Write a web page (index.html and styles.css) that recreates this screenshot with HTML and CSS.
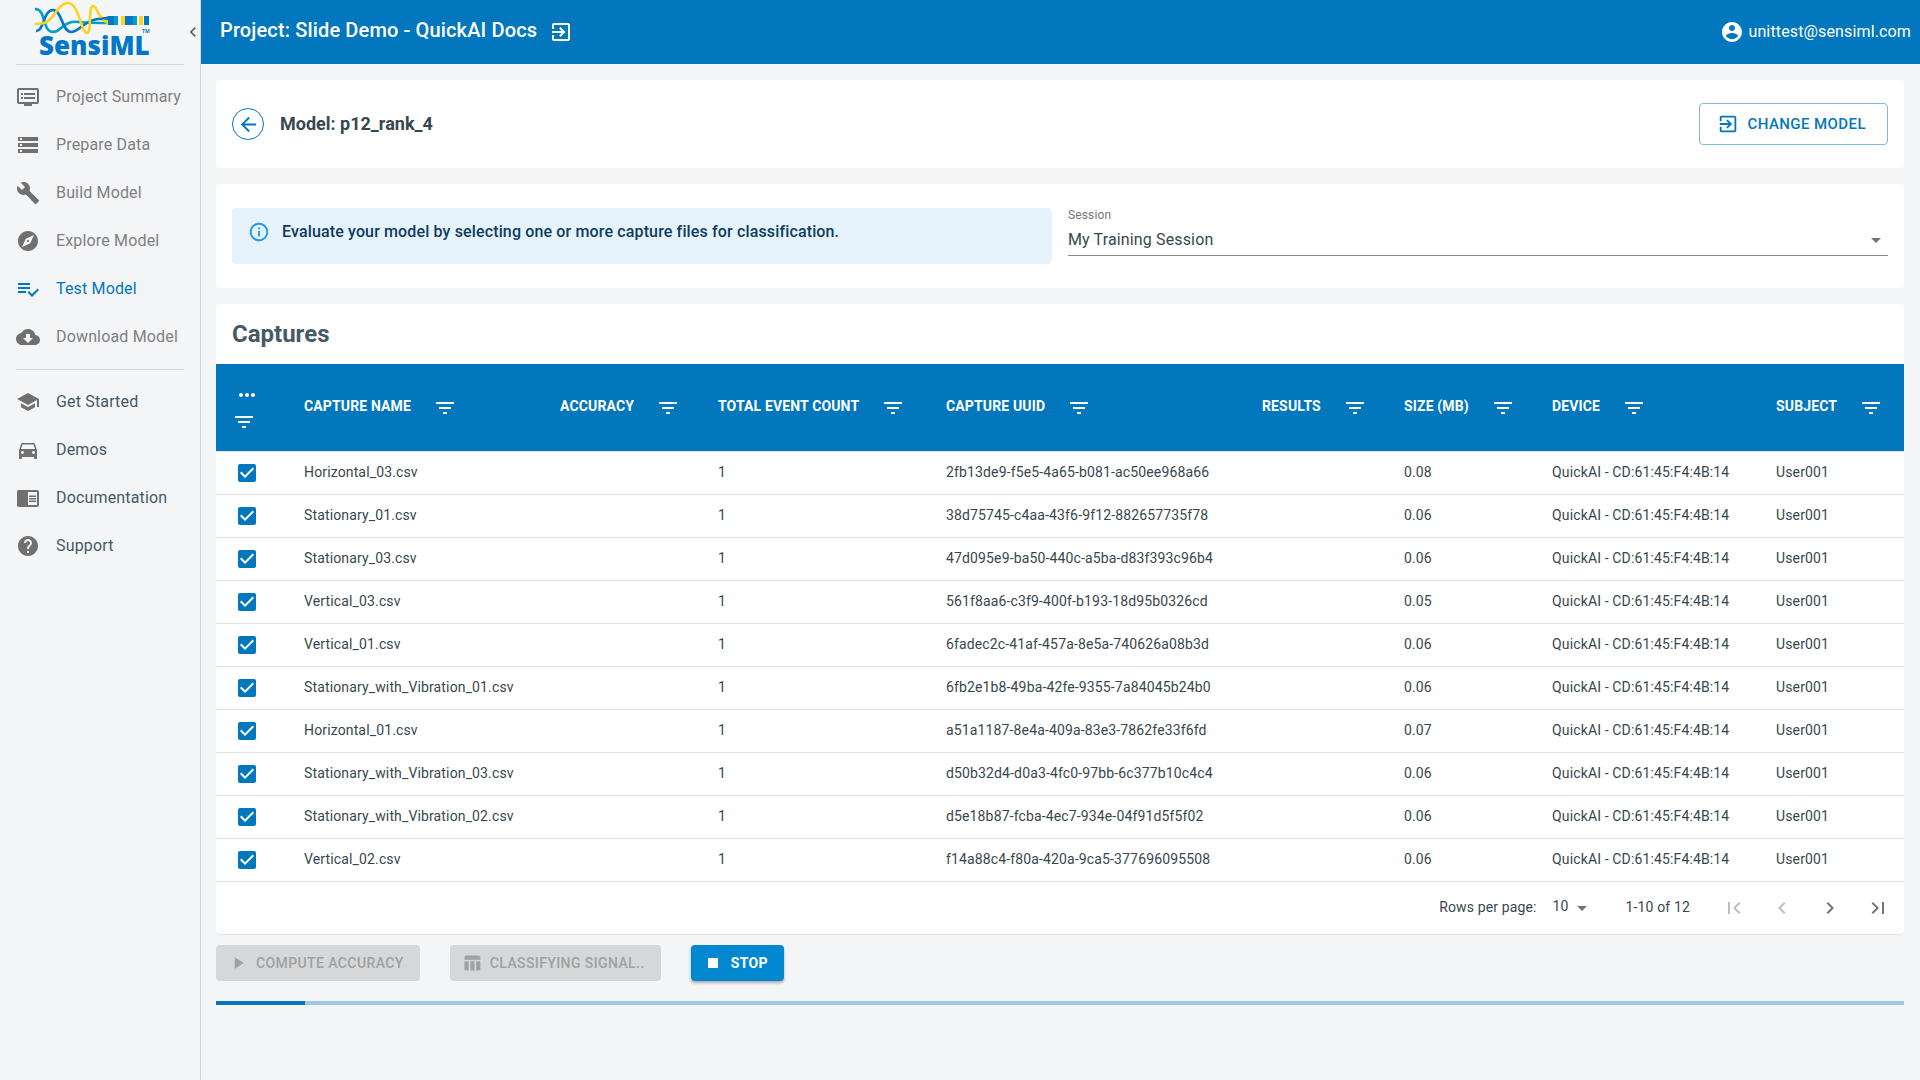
FILE: index.html
```html
<!DOCTYPE html>
<html lang="en">
<head>
<meta charset="utf-8">
<title>SensiML - Test Model</title>
<link rel="stylesheet" href="styles.css">
</head>
<body>
<svg class="defs" aria-hidden="true">
  <symbol id="filter" viewBox="0 0 24 24"><path d="M10 18h4v-2h-4v2zM3 6v2h18V6H3zm3 7h12v-2H6v2z"/></symbol>
  <symbol id="exit" viewBox="0 0 24 24"><path d="M10.09 15.59L11.5 17l5-5-5-5-1.41 1.41L12.67 11H3v2h9.67l-2.58 2.59zM19 3H5c-1.11 0-2 .9-2 2v4h2V5h14v14H5v-4H3v4c0 1.1.89 2 2 2h14c1.1 0 2-.9 2-2V5c0-1.1-.9-2-2-2z"/></symbol>
</svg>
<div class="app">
  <aside class="sidebar">
    <div class="brand">
      <svg class="logo" viewBox="0 0 130 64" role="img" aria-label="SensiML">
        <g fill="none" stroke-width="2.600">
          <path stroke="#00a0c8" d="M7 9c8 0 8 10 11 17 3 8 10 7 15 2 6-5 10-7 18-6 10 1 20 1 32 1"/>
          <path stroke="#0277c8" d="M8 31c8 1 7-21 17-21 9 0 9 22 18 22 8 0 14-12 27-13l12-1"/>
          <path stroke="#ffd21c" d="M7 24c5 0 9 0 13-3 7-5 11-18 20-18 11 0 13 30 19 30 5 0 1-27 6-27 4 0 4 10 11 13l8 3"/>
        </g>
        <path fill="#0277c8" d="M68 19l13-3v4z"/>
        <path fill="#ffd21c" d="M72 20h9v5z"/>
        <path fill="#0277c8" d="M80 16h7v9h-7zM97 16h8v9h-8zM116 16h5v9h-5z"/>
        <path fill="#00a0c8" d="M86 16h4v9h-4zM105 16h4v9h-4z"/>
        <path fill="#ffd21c" d="M93 16h4v9h-4zM111 16h4v9h-4z"/>
        <text class="logo-name" x="11" y="55">SensiML</text>
        <text class="logo-tm" x="114" y="33">TM</text>
      </svg>
      <button class="collapse" aria-label="Collapse menu"><svg viewBox="0 0 24 24"><path d="M15.41 7.41L14 6l-6 6 6 6 1.41-1.41L10.83 12z"/></svg></button>
    </div>
    <nav class="menu">
      <a href="#"><svg viewBox="0 0 24 24"><path d="M21 3H3c-1.1 0-2 .9-2 2v12c0 1.1.9 2 2 2h5v2h8v-2h5c1.1 0 1.99-.9 1.99-2L23 5c0-1.1-.9-2-2-2zm0 14H3V5h18v12zm-2-9H8v2h11V8zm0 4H8v2h11v-2zM7 8H5v2h2V8zm0 4H5v2h2v-2z"/></svg>Project Summary</a>
      <a href="#"><svg viewBox="0 0 24 24"><path d="M2 20h20v-4H2v4zm2-3h2v2H4v-2zM2 4v4h20V4H2zm4 3H4V5h2v2zm-4 7h20v-4H2v4zm2-3h2v2H4v-2z"/></svg>Prepare Data</a>
      <a href="#"><svg viewBox="0 0 24 24"><path d="M22.7 19l-9.1-9.1c.9-2.3.4-5-1.5-6.9-2-2-5-2.4-7.4-1.3L9 6 6 9 1.6 4.7C.4 7.1.9 10.1 2.9 12.1c1.9 1.9 4.6 2.4 6.9 1.5l9.1 9.1c.4.4 1 .4 1.4 0l2.3-2.3c.5-.4.5-1.1.1-1.4z"/></svg>Build Model</a>
      <a href="#"><svg viewBox="0 0 24 24"><path d="M12 10.9c-.61 0-1.1.49-1.1 1.1s.49 1.1 1.1 1.1c.61 0 1.1-.49 1.1-1.1s-.49-1.1-1.1-1.1zM12 2C6.48 2 2 6.48 2 12s4.48 10 10 10 10-4.48 10-10S17.52 2 12 2zm2.19 12.19L6 18l3.81-8.19L18 6l-3.81 8.19z"/></svg>Explore Model</a>
      <a href="#" class="active" aria-current="page"><svg viewBox="0 0 24 24"><path d="M14 10H2v2h12v-2zm0-4H2v2h12V6zM2 16h8v-2H2v2zm19.5-4.5L23 13l-6.99 7-4.51-4.5L13 14l3.01 3 5.49-5.5z"/></svg>Test Model</a>
      <a href="#"><svg viewBox="0 0 24 24"><path d="M19.35 10.04C18.67 6.59 15.64 4 12 4 9.11 4 6.6 5.64 5.35 8.04 2.34 8.36 0 10.91 0 14c0 3.31 2.69 6 6 6h13c2.76 0 5-2.24 5-5 0-2.64-2.05-4.78-4.65-4.96zM17 13l-5 5-5-5h3V9h4v4h3z"/></svg>Download Model</a>
    </nav>
    <nav class="menu menu-help">
      <a href="#"><svg viewBox="0 0 24 24"><path d="M5 13.18v4L12 21l7-3.82v-4L12 17l-7-3.82zM12 3L1 9l11 6 9-4.91V17h2V9L12 3z"/></svg>Get Started</a>
      <a href="#"><svg viewBox="0 0 24 24"><path d="M18.92 6.01C18.72 5.42 18.16 5 17.5 5h-11c-.66 0-1.21.42-1.42 1.01L3 12v8c0 .55.45 1 1 1h1c.55 0 1-.45 1-1v-1h12v1c0 .55.45 1 1 1h1c.55 0 1-.45 1-1v-8l-2.08-5.99zM6.5 16c-.83 0-1.5-.67-1.5-1.5S5.67 13 6.5 13s1.5.67 1.5 1.5S7.33 16 6.5 16zm11 0c-.83 0-1.5-.67-1.5-1.5s.67-1.5 1.5-1.5 1.5.67 1.5 1.5-.67 1.5-1.5 1.5zM5 11l1.5-4.5h11L19 11H5z"/></svg>Demos</a>
      <a href="#"><svg viewBox="0 0 24 24"><path d="M13 12h7v1.5h-7zm0-2.500h7V11h-7zm0 5h7V16h-7zM21 4H3c-1.100 0-2 .9-2 2v13c0 1.100.9 2 2 2h18c1.100 0 2-.9 2-2V6c0-1.100-.9-2-2-2zm0 15h-9V6h9v13z"/></svg>Documentation</a>
      <a href="#"><svg viewBox="0 0 24 24"><path d="M12 2C6.48 2 2 6.48 2 12s4.480 10 10 10 10-4.480 10-10S17.520 2 12 2zm1 17h-2v-2h2v2zm2.070-7.750l-.9.920C13.450 12.900 13 13.500 13 15h-2v-.5c0-1.100.450-2.100 1.170-2.830l1.240-1.260c.370-.360.590-.860.590-1.410 0-1.100-.9-2-2-2s-2 .9-2 2H8c0-2.210 1.790-4 4-4s4 1.790 4 4c0 .880-.360 1.680-.930 2.250z"/></svg>Support</a>
    </nav>
  </aside>

  <div class="page">
    <header class="topbar">
      <h1>Project: Slide Demo - QuickAI Docs</h1>
      <button aria-label="Change project"><svg><use href="#exit"/></svg></button>
      <a class="account" href="#"><svg viewBox="0 0 24 24"><path d="M12 2C6.480 2 2 6.480 2 12s4.480 10 10 10 10-4.480 10-10S17.520 2 12 2zm0 3c1.660 0 3 1.340 3 3s-1.340 3-3 3-3-1.340-3-3 1.340-3 3-3zm0 14.200c-2.500 0-4.710-1.280-6-3.220.030-1.990 4-3.080 6-3.080 1.990 0 5.970 1.090 6 3.080-1.290 1.940-3.500 3.220-6 3.220z"/></svg>unittest@sensiml.com</a>
    </header>

    <main class="content">
      <section class="card model">
        <button class="back" aria-label="Back"><svg viewBox="0 0 24 24"><path d="M20 11H7.830l5.590-5.590L12 4l-8 8 8 8 1.410-1.410L7.830 13H20v-2z"/></svg></button>
        <h2>Model: p12_rank_4</h2>
        <button class="change"><svg><use href="#exit"/></svg>Change Model</button>
      </section>

      <section class="card setup">
        <div class="alert" role="status">
          <svg viewBox="0 0 24 24"><path d="M11 7h2v2h-2zm0 4h2v6h-2zm1-9C6.480 2 2 6.480 2 12s4.480 10 10 10 10-4.480 10-10S17.520 2 12 2zm0 18c-4.410 0-8-3.590-8-8s3.590-8 8-8 8 3.590 8 8-3.590 8-8 8z"/></svg>
          <p>Evaluate your model by selecting one or more capture files for classification.</p>
        </div>
        <div class="field">
          <label for="session">Session</label>
          <span class="select"><select id="session"><option>My Training Session</option></select><svg viewBox="0 0 24 24"><path d="M7 10l5 5 5-5z"/></svg></span>
        </div>
      </section>

      <section class="card captures">
        <h2>Captures</h2>
        <table>
          <colgroup><col class="c-check"><col class="c-name"><col class="c-acc"><col class="c-count"><col class="c-uuid"><col class="c-res"><col class="c-size"><col class="c-dev"><col class="c-sub"></colgroup>
          <thead>
            <tr>
              <th class="tools"><button aria-label="Selection menu"><svg viewBox="0 0 24 24"><path d="M6 10c-1.100 0-2 .9-2 2s.9 2 2 2 2-.9 2-2-.9-2-2-2zm12 0c-1.100 0-2 .9-2 2s.9 2 2 2 2-.9 2-2-.9-2-2-2zm-6 0c-1.100 0-2 .9-2 2s.9 2 2 2 2-.9 2-2-.9-2-2-2z"/></svg></button><button aria-label="Filter selection"><svg><use href="#filter"/></svg></button></th>
              <th><div class="head">Capture Name<button aria-label="Filter capture name"><svg><use href="#filter"/></svg></button></div></th>
              <th><div class="head">Accuracy<button aria-label="Filter accuracy"><svg><use href="#filter"/></svg></button></div></th>
              <th><div class="head">Total Event Count<button aria-label="Filter total event count"><svg><use href="#filter"/></svg></button></div></th>
              <th><div class="head">Capture UUID<button aria-label="Filter capture UUID"><svg><use href="#filter"/></svg></button></div></th>
              <th><div class="head">Results<button aria-label="Filter results"><svg><use href="#filter"/></svg></button></div></th>
              <th><div class="head">Size (MB)<button aria-label="Filter size"><svg><use href="#filter"/></svg></button></div></th>
              <th><div class="head">Device<button aria-label="Filter device"><svg><use href="#filter"/></svg></button></div></th>
              <th><div class="head">Subject<button aria-label="Filter subject"><svg><use href="#filter"/></svg></button></div></th>
            </tr>
          </thead>
          <tbody>
            <tr><td><input type="checkbox" checked aria-label="Horizontal_03.csv"></td><td>Horizontal_03.csv</td><td></td><td>1</td><td>2fb13de9-f5e5-4a65-b081-ac50ee968a66</td><td></td><td>0.08</td><td>QuickAI - CD:61:45:F4:4B:14</td><td>User001</td></tr>
            <tr><td><input type="checkbox" checked aria-label="Stationary_01.csv"></td><td>Stationary_01.csv</td><td></td><td>1</td><td>38d75745-c4aa-43f6-9f12-882657735f78</td><td></td><td>0.06</td><td>QuickAI - CD:61:45:F4:4B:14</td><td>User001</td></tr>
            <tr><td><input type="checkbox" checked aria-label="Stationary_03.csv"></td><td>Stationary_03.csv</td><td></td><td>1</td><td>47d095e9-ba50-440c-a5ba-d83f393c96b4</td><td></td><td>0.06</td><td>QuickAI - CD:61:45:F4:4B:14</td><td>User001</td></tr>
            <tr><td><input type="checkbox" checked aria-label="Vertical_03.csv"></td><td>Vertical_03.csv</td><td></td><td>1</td><td>561f8aa6-c3f9-400f-b193-18d95b0326cd</td><td></td><td>0.05</td><td>QuickAI - CD:61:45:F4:4B:14</td><td>User001</td></tr>
            <tr><td><input type="checkbox" checked aria-label="Vertical_01.csv"></td><td>Vertical_01.csv</td><td></td><td>1</td><td>6fadec2c-41af-457a-8e5a-740626a08b3d</td><td></td><td>0.06</td><td>QuickAI - CD:61:45:F4:4B:14</td><td>User001</td></tr>
            <tr><td><input type="checkbox" checked aria-label="Stationary_with_Vibration_01.csv"></td><td>Stationary_with_Vibration_01.csv</td><td></td><td>1</td><td>6fb2e1b8-49ba-42fe-9355-7a84045b24b0</td><td></td><td>0.06</td><td>QuickAI - CD:61:45:F4:4B:14</td><td>User001</td></tr>
            <tr><td><input type="checkbox" checked aria-label="Horizontal_01.csv"></td><td>Horizontal_01.csv</td><td></td><td>1</td><td>a51a1187-8e4a-409a-83e3-7862fe33f6fd</td><td></td><td>0.07</td><td>QuickAI - CD:61:45:F4:4B:14</td><td>User001</td></tr>
            <tr><td><input type="checkbox" checked aria-label="Stationary_with_Vibration_03.csv"></td><td>Stationary_with_Vibration_03.csv</td><td></td><td>1</td><td>d50b32d4-d0a3-4fc0-97bb-6c377b10c4c4</td><td></td><td>0.06</td><td>QuickAI - CD:61:45:F4:4B:14</td><td>User001</td></tr>
            <tr><td><input type="checkbox" checked aria-label="Stationary_with_Vibration_02.csv"></td><td>Stationary_with_Vibration_02.csv</td><td></td><td>1</td><td>d5e18b87-fcba-4ec7-934e-04f91d5f5f02</td><td></td><td>0.06</td><td>QuickAI - CD:61:45:F4:4B:14</td><td>User001</td></tr>
            <tr><td><input type="checkbox" checked aria-label="Vertical_02.csv"></td><td>Vertical_02.csv</td><td></td><td>1</td><td>f14a88c4-f80a-420a-9ca5-377696095508</td><td></td><td>0.06</td><td>QuickAI - CD:61:45:F4:4B:14</td><td>User001</td></tr>
          </tbody>
        </table>
        <div class="pager">
          <label for="rows">Rows per page:</label>
          <span class="select rows"><select id="rows"><option>10</option></select><svg viewBox="0 0 24 24"><path d="M7 10l5 5 5-5z"/></svg></span>
          <span class="range">1-10 of 12</span>
          <div class="steps">
            <button disabled aria-label="First page"><svg viewBox="0 0 24 24"><path d="M18.410 16.590L13.820 12l4.590-4.590L17 6l-6 6 6 6zM6 6h2v12H6z"/></svg></button>
            <button disabled aria-label="Previous page"><svg viewBox="0 0 24 24"><path d="M15.410 7.410L14 6l-6 6 6 6 1.410-1.410L10.830 12z"/></svg></button>
            <button aria-label="Next page"><svg viewBox="0 0 24 24"><path d="M10 6L8.590 7.410 13.170 12l-4.580 4.590L10 18l6-6z"/></svg></button>
            <button aria-label="Last page"><svg viewBox="0 0 24 24"><path d="M5.590 7.410L10.180 12l-4.590 4.590L7 18l6-6-6-6zM16 6h2v12h-2z"/></svg></button>
          </div>
        </div>
      </section>

      <div class="actions">
        <button class="btn" disabled><svg viewBox="0 0 24 24"><path d="M8 5v14l11-7z"/></svg>Compute Accuracy</button>
        <button class="btn" disabled><svg viewBox="0 0 24 24"><path d="M10 10.020h5V21h-5zM17 21h3c1.100 0 2-.9 2-2v-9h-5v11zm3-18H5c-1.100 0-2 .9-2 2v3h19V5c0-1.100-.9-2-2-2zM3 19c0 1.100.9 2 2 2h3V10H3v9z"/></svg>Classifying Signal..</button>
        <button class="btn stop"><svg viewBox="0 0 24 24"><path d="M6 6h12v12H6z"/></svg>Stop</button>
      </div>
      <div class="progress" role="progressbar" aria-label="Classification progress"><div class="progress-bar"></div></div>
    </main>
  </div>
</div>
</body>
</html>
```
FILE: styles.css
```css
:root {
  --primary: #0277bd;
  --text: #37474f;
  --heading: #455a64;
  --line: #e0e0e0;
  --icon: #757575;
}

* { box-sizing: border-box; }

body {
  margin: 0;
  background: #f4f5f7;
  color: var(--text);
  font: 400 14px/20px Roboto, "Liberation Sans", sans-serif;
  letter-spacing: 0.01em;
}

h1, h2, p { margin: 0; }

svg {
  width: 24px;
  height: 24px;
  fill: currentColor;
  flex: none;
  display: block;
}

.defs { display: none; }

button {
  border: 0;
  padding: 0;
  background: none;
  color: inherit;
  font: inherit;
  cursor: pointer;
}

a { color: inherit; text-decoration: none; }

.app {
  display: flex;
  min-height: 100vh;
}

/* Sidebar */
.sidebar {
  flex: none;
  width: 201px;
  border-right: 1px solid #d3d5d8;
}

.brand {
  display: flex;
  align-items: center;
  height: 64px;
  padding-left: 28px;
}

.logo { width: 130px; height: 64px; }
.logo-name { font: 800 26px "Open Sans", sans-serif; letter-spacing: 0; fill: #0277c8; }
.logo-tm { font: 700 5px "Open Sans", sans-serif; letter-spacing: 0; fill: #0277c8; }

.collapse {
  display: flex;
  flex: 1;
  justify-content: flex-end;
  color: #616161;
}

.collapse svg { width: 20px; height: 20px; margin-right: -3px; }

.menu {
  margin: 0 16px;
  padding: 8px 0;
  border-top: 1px solid #d3d5d8;
  color: #808080;
}

.menu a {
  display: flex;
  align-items: center;
  gap: 16px;
  height: 48px;
  font-size: 16px;
  letter-spacing: 0.01em;
  white-space: nowrap;
}

.menu svg { color: #707070; }
.menu-help { color: var(--heading); }
.menu .active, .menu .active svg { color: var(--primary); }

/* Top bar */
.page { flex: 1; min-width: 0; }

.topbar {
  display: flex;
  align-items: center;
  gap: 12px;
  height: 64px;
  padding: 0 9px 0 19px;
  background: var(--primary);
  color: #fff;
}

.topbar h1 { font-size: 20px; font-weight: 500; padding-bottom: 4px; }

.account {
  display: flex;
  align-items: center;
  gap: 4px;
  margin-left: auto;
  font-size: 16px;
}

/* Cards */
.content { padding: 16px 16px 16px 15px; }

.card {
  background: #fff;
  border-radius: 4px;
  margin-bottom: 16px;
}

.model {
  display: flex;
  align-items: center;
  gap: 16px;
  padding: 23px 16px;
}

.model h2 { font-size: 18px; font-weight: 700; letter-spacing: 0; }

.back {
  display: flex;
  align-items: center;
  justify-content: center;
  width: 32px;
  height: 32px;
  border: 1px solid var(--primary);
  border-radius: 50%;
  color: var(--primary);
}

.back svg { width: 23px; height: 23px; }

.change {
  display: flex;
  align-items: center;
  gap: 8px;
  height: 42px;
  margin-left: auto;
  padding: 0 21px 0 17px;
  border: 1px solid #80bbde;
  border-radius: 4px;
  color: var(--primary);
  font-size: 15px;
  font-weight: 500;
  letter-spacing: 0.02857em;
  text-transform: uppercase;
}

.change svg { width: 22px; height: 22px; }

.setup {
  display: grid;
  grid-template-columns: 1fr 1fr;
  gap: 16px;
  padding: 24px 16px;
}

.alert {
  display: flex;
  gap: 12px;
  height: 56px;
  padding: 13px 16px;
  border-radius: 4px;
  background: #e6f3fd;
  color: #0d3c61;
  font-size: 16px;
  font-weight: 500;
  line-height: 22px;
}

.alert svg { width: 22px; height: 22px; color: #2196f3; }

.field { height: 48px; border-bottom: 1px solid #8c8c8c; }
.field label { display: block; color: #757575; font-size: 12px; line-height: 14px; }

.select {
  display: grid;
  align-items: center;
}

.select > * { grid-area: 1 / 1; }
.select svg { justify-self: end; pointer-events: none; color: var(--icon); }

.select select {
  appearance: none;
  width: 100%;
  border: 0;
  padding: 0;
  background: none;
  color: inherit;
  font: inherit;
  letter-spacing: inherit;
}

.field .select { height: 36px; font-size: 16px; }

/* Captures table */
.captures { margin-bottom: 10px; border-bottom: 1px solid var(--line); }

.captures h2 {
  padding: 14px 16px;
  color: var(--heading);
  font-size: 24px;
  font-weight: 700;
  letter-spacing: 0;
  line-height: 32px;
}

table {
  width: 100%;
  border-collapse: separate;
  border-spacing: 0;
  table-layout: fixed;
}

.c-check { width: 72px; }
.c-name { width: 256px; }
.c-acc { width: 158px; }
.c-count { width: 228px; }
.c-uuid { width: 316px; }
.c-res { width: 142px; }
.c-size { width: 148px; }
.c-dev { width: 224px; }
.c-sub { width: 144px; }

th, td {
  padding: 0 0 0 16px;
  border-bottom: 1px solid var(--line);
  text-align: left;
  white-space: nowrap;
}

th {
  height: 88px;
  background: var(--primary);
  color: #fff;
  font-weight: 700;
  text-transform: uppercase;
}

.head { display: flex; align-items: center; gap: 22px; padding-bottom: 4px; }
.head svg { margin-top: 4px; }

.tools { padding-top: 2px; }
.tools button { display: block; margin-bottom: 3px; }
.tools button:first-child { margin-left: 3px; }
.tools button:last-child { margin-bottom: 0; }

td { height: 43px; padding-bottom: 2px; }

td input {
  display: block;
  appearance: none;
  width: 18px;
  height: 18px;
  margin: 2px 0 0 6px;
  border-radius: 2px;
  background: var(--primary);
}

td input:checked::before {
  content: "";
  display: block;
  width: 18px;
  height: 18px;
  background: #fff;
  clip-path: path("M7 14L2 9L3.410 7.590L7 11.170L14.590 3.580L16 5Z");
}

.pager {
  display: flex;
  align-items: center;
  justify-content: flex-end;
  height: 52px;
  padding-right: 2px;
}

.pager label, .range { padding-bottom: 2px; }
.rows { width: 41px; margin: 0 32px 0 16px; }
.rows select { padding-bottom: 4px; }
.range { margin-right: 20px; }

.steps { display: flex; color: var(--icon); }
.steps button { display: flex; justify-content: center; width: 48px; }
.steps button:disabled { color: #bdbdbd; }

/* Actions */
.actions { display: flex; gap: 30px; }

.btn {
  display: flex;
  align-items: center;
  gap: 8px;
  height: 36px;
  padding: 0 16px 0 12px;
  border-radius: 4px;
  background: #d5d7d8;
  color: #a0a1a2;
  font-weight: 500;
  letter-spacing: 0.02857em;
  text-transform: uppercase;
}

.btn svg { width: 20px; height: 20px; }

.stop {
  background: #0288d1;
  color: #fff;
  font-weight: 700;
  box-shadow: 0 2px 3px rgba(0, 0, 0, 0.3);
}

.progress { height: 4px; margin-top: 20px; background: #9ccae5; }
.progress-bar { width: 89px; height: 4px; background: var(--primary); }
```
